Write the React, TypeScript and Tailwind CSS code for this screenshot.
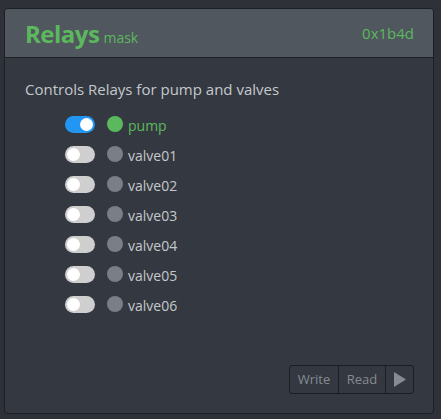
import React from "react";

const rows = [
  { name: "pump", on: true },
  { name: "valve01", on: false },
  { name: "valve02", on: false },
  { name: "valve03", on: false },
  { name: "valve04", on: false },
  { name: "valve05", on: false },
  { name: "valve06", on: false },
];

export default function App() {
  return (
    <div
      className="w-[441px] h-[419px] bg-[#2e3238] pt-[8px] pl-[4px] overflow-hidden"
      style={{ fontFamily: '"Open Sans", "Noto Sans", sans-serif' }}
    >
      <div className="w-[430px] h-[406px] rounded-[4px] border border-[#1c1f23] bg-[#343840] flex flex-col overflow-hidden">
        <div className="h-[49px] bg-[#50575f] border-b border-[#1c1f23] flex items-center justify-between pl-[20px] pr-[19px]">
          <div className="flex items-baseline gap-[4px] pt-[2px]">
            <span className="text-[24px] font-bold text-[#5cb85c] leading-none tracking-[-0.5px]">Relays</span>
            <span className="text-[14px] text-[#5cb85c] leading-none">mask</span>
          </div>
          <span className="text-[15px] text-[#5cb85c] leading-none">0x1b4d</span>
        </div>
        <div className="flex-1 flex flex-col pl-[20px] pt-[22px]">
          <div className="text-[15px] text-[#c4c8cc] leading-[18px]">Controls Relays for pump and valves</div>
          <div className="flex flex-col pl-[40px] pt-[17px] gap-[12px]">
            {rows.map((r) => (
              <div key={r.name} className="flex items-center h-[18px]">
                <div
                  className={
                    "w-[30px] h-[17px] rounded-full relative " +
                    (r.on ? "bg-[#2196f3]" : "bg-[#cfcfcf]")
                  }
                >
                  <div
                    className={
                      "absolute top-[2px] w-[13px] h-[13px] rounded-full bg-white " +
                      (r.on ? "left-[15px]" : "left-[2px]")
                    }
                  />
                </div>
                <div
                  className={
                    "ml-[12px] w-[16px] h-[16px] rounded-full " +
                    (r.on ? "bg-[#5cb85c]" : "bg-[#7a7f87]")
                  }
                />
                <span
                  className={
                    "ml-[5px] text-[14px] leading-none pt-[3px] " +
                    (r.on ? "text-[#5cb85c]" : "text-[#c4c8cc]")
                  }
                >
                  {r.name}
                </span>
              </div>
            ))}
          </div>
          <div className="flex-1" />
          <div className="flex justify-end pr-[19px] pb-[19px]">
            <div className="flex h-[29px] border border-[#1a1d21] rounded-[3px] overflow-hidden">
              <div className="w-[49px] flex items-center justify-center text-[13px] text-[#858b92] border-r border-[#1a1d21]">Write</div>
              <div className="w-[47px] flex items-center justify-center text-[13px] text-[#858b92] border-r border-[#1a1d21]">Read</div>
              <div className="w-[27px] flex items-center justify-center">
                <svg width="12" height="15" viewBox="0 0 12 15">
                  <polygon points="0,0 12,7.5 0,15" fill="#858b92" />
                </svg>
              </div>
            </div>
          </div>
        </div>
      </div>
    </div>
  );
}
